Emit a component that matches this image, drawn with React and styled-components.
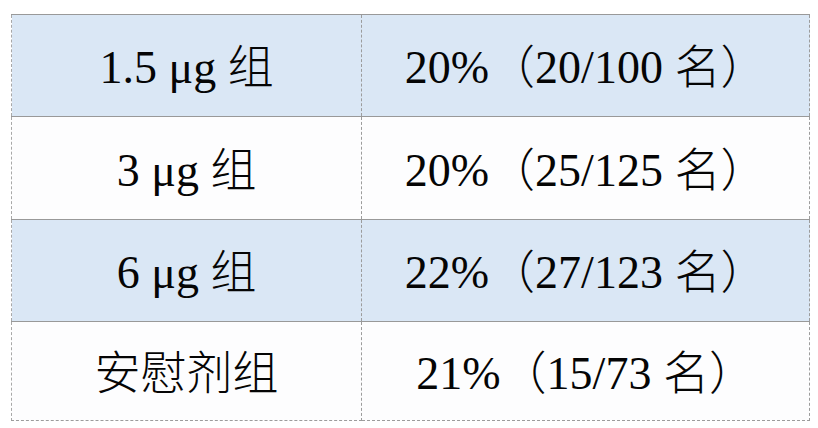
import React from 'react';
import styled, { createGlobalStyle } from 'styled-components';

const Global = createGlobalStyle`
  html, body {
    margin: 0;
    padding: 0;
    background: #ffffff;
  }
`;

const Page = styled.div`
  padding: 14px 0 0 11px;
  width: 818px;
  height: 428px;
  box-sizing: border-box;
`;

const Table = styled.table`
  border-collapse: collapse;
  width: 799px;
`;

const Row = styled.tr`
  height: ${({ h }) => h}px;
  background: ${({ shaded }) => (shaded ? '#dae7f5' : '#fdfdfe')};
`;

const Cell = styled.td`
  border: 1px dashed #9c9c9c;
  border-top: 1px solid #999999;
  text-align: center;
  vertical-align: middle;
  padding: 0;
  width: ${({ w }) => w}px;
  font-size: 46px;
  color: #050505;
  line-height: 1;
  &:first-child {
    border-left: 1px dashed #a8a8a8;
  }
`;

const Latin = styled.span`
  font-family: "Liberation Serif", "Times New Roman", Times, serif;
`;

const Han = styled.span`
  font-family: "Noto Sans CJK SC", sans-serif;
  font-weight: 300;
`;

const rows = [
  { dose: '1.5 μg ', group: '组', rate: '20%', count: '20/100', shaded: true, h: 102 },
  { dose: '3 μg ', group: '组', rate: '20%', count: '25/125', shaded: false, h: 103 },
  { dose: '6 μg ', group: '组', rate: '22%', count: '27/123', shaded: true, h: 102 },
  { dose: '', group: '安慰剂组', rate: '21%', count: '15/73', shaded: false, h: 99 },
];

export default function App() {
  return (
    <Page>
      <Global />
      <Table>
        <tbody>
          {rows.map((r, i) => (
            <Row key={i} shaded={r.shaded} h={r.h}>
              <Cell w={351}>
                {r.dose && <Latin>{r.dose}</Latin>}
                <Han>{r.group}</Han>
              </Cell>
              <Cell w={448}>
                <Latin>{r.rate}</Latin>
                <Han>（</Han>
                <Latin>{r.count} </Latin>
                <Han>名）</Han>
              </Cell>
            </Row>
          ))}
        </tbody>
      </Table>
    </Page>
  );
}
